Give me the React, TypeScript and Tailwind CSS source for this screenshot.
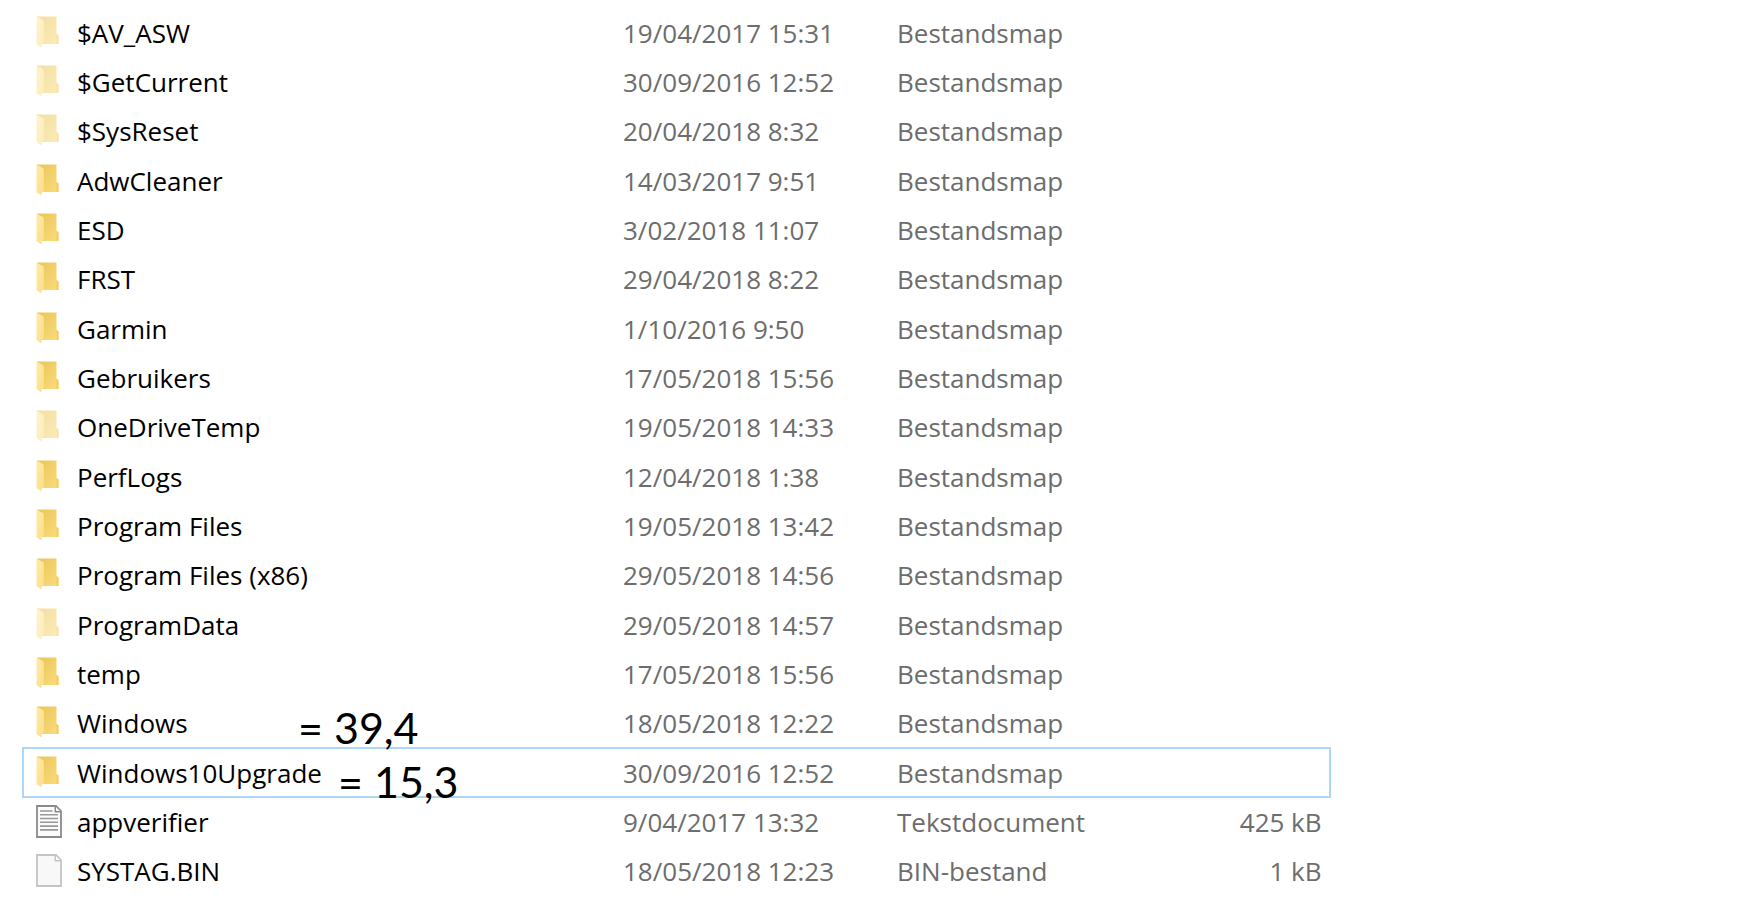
type Kind = 'folder' | 'hidden' | 'text' | 'file';

interface Entry {
  name: string;
  date: string;
  type: string;
  kind: Kind;
  size?: string;
  selected?: boolean;
  note?: string;
  notePlace?: string;
}

const entries: Entry[] = [
  { name: '$AV_ASW', date: '19/04/2017 15:31', type: 'Bestandsmap', kind: 'hidden' },
  { name: '$GetCurrent', date: '30/09/2016 12:52', type: 'Bestandsmap', kind: 'hidden' },
  { name: '$SysReset', date: '20/04/2018 8:32', type: 'Bestandsmap', kind: 'hidden' },
  { name: 'AdwCleaner', date: '14/03/2017 9:51', type: 'Bestandsmap', kind: 'folder' },
  { name: 'ESD', date: '3/02/2018 11:07', type: 'Bestandsmap', kind: 'folder' },
  { name: 'FRST', date: '29/04/2018 8:22', type: 'Bestandsmap', kind: 'folder' },
  { name: 'Garmin', date: '1/10/2016 9:50', type: 'Bestandsmap', kind: 'folder' },
  { name: 'Gebruikers', date: '17/05/2018 15:56', type: 'Bestandsmap', kind: 'folder' },
  { name: 'OneDriveTemp', date: '19/05/2018 14:33', type: 'Bestandsmap', kind: 'hidden' },
  { name: 'PerfLogs', date: '12/04/2018 1:38', type: 'Bestandsmap', kind: 'folder' },
  { name: 'Program Files', date: '19/05/2018 13:42', type: 'Bestandsmap', kind: 'folder' },
  { name: 'Program Files (x86)', date: '29/05/2018 14:56', type: 'Bestandsmap', kind: 'folder' },
  { name: 'ProgramData', date: '29/05/2018 14:57', type: 'Bestandsmap', kind: 'hidden' },
  { name: 'temp', date: '17/05/2018 15:56', type: 'Bestandsmap', kind: 'folder' },
  { name: 'Windows', date: '18/05/2018 12:22', type: 'Bestandsmap', kind: 'folder', note: '= 39,4', notePlace: 'left-[275px] top-1' },
  { name: 'Windows10Upgrade', date: '30/09/2016 12:52', type: 'Bestandsmap', kind: 'folder', selected: true, note: '= 15,3', notePlace: 'left-[315px] top-2' },
  { name: 'appverifier', date: '9/04/2017 13:32', type: 'Tekstdocument', kind: 'text', size: '425 kB' },
  { name: 'SYSTAG.BIN', date: '18/05/2018 12:23', type: 'BIN-bestand', kind: 'file', size: '1 kB' },
];

function FolderIcon({ faded }: { faded: boolean }) {
  return (
    <svg width="26" height="34" viewBox="0 0 26 34" aria-hidden="true" className={faded ? 'opacity-55' : ''}>
      <defs>
        <linearGradient id="folder-back" x1="0" y1="0" x2="1" y2="1">
          <stop offset="0" stopColor="#e9c558" />
          <stop offset="1" stopColor="#fbdc7c" />
        </linearGradient>
        <linearGradient id="folder-flap" x1="0" y1="0" x2="1" y2="1">
          <stop offset="0" stopColor="#ffebaa" />
          <stop offset="1" stopColor="#fbdd86" />
        </linearGradient>
      </defs>
      <path d="M1 0.5H20.5V17.5L22.5 19.5V28H1Z" fill="url(#folder-back)" />
      <path d="M20.5 18L22.5 19.5V28H20.5Z" fill="#f3cd63" />
      <path d="M0.5 0.5L7 4Q7.8 4.5 7.8 5.5V26Q7.8 27 7 27.5L5.5 28.5V31.5L1 28.5Q0.5 28.1 0.5 27.5Z" fill="url(#folder-flap)" />
    </svg>
  );
}

function DocumentIcon({ lined }: { lined: boolean }) {
  const stroke = lined ? '#8a8a8a' : '#c4c4c4';
  return (
    <svg width="26" height="34" viewBox="0 0 26 34" fill="none" aria-hidden="true">
      <path d="M1 1H20L25 6V32H1Z" fill={lined ? '#fbfbfb' : '#f8f8f9'} stroke={stroke} strokeWidth="1.8" />
      <path d="M19.3 1.5V6.7H24.6" fill="#fff" stroke={stroke} strokeWidth="1.5" />
      {lined && (
        <path d="M4 6H16.5M4 9.7H22M4 13.5H22M4 17.3H22M4 21.1H22M4 24.9H22" stroke="#999" strokeWidth="1.6" />
      )}
    </svg>
  );
}

function EntryIcon({ kind }: { kind: Kind }) {
  if (kind === 'folder' || kind === 'hidden') return <FolderIcon faded={kind === 'hidden'} />;
  return <DocumentIcon lined={kind === 'text'} />;
}

export default function App() {
  return (
    <main className="min-h-screen overflow-x-hidden bg-white pl-[23px] pt-2 font-['Open_Sans',sans-serif] text-[26px] leading-8 text-[#6d6d6d]">
      <table className="w-[75.7%] table-fixed border-collapse whitespace-nowrap">
        <colgroup>
          <col className="w-[600px]" />
          <col className="w-[274px]" />
          <col className="w-[240px]" />
          <col />
        </colgroup>
        <tbody>
          {entries.map((entry) => (
            <tr
              key={entry.name}
              className={
                entry.selected
                  ? 'h-[49px] outline-2 -outline-offset-1 outline-[#aed6f6]'
                  : 'h-[49px] nth-[3n]:h-[50px]'
              }
            >
              <td className="relative p-0 pl-[13px]">
                <div className="flex items-center gap-[15px] text-black">
                  <EntryIcon kind={entry.kind} />
                  <span>{entry.name}</span>
                </div>
                {entry.note && (
                  <span className={`absolute font-['Lato',sans-serif] text-[43px] leading-[52px] text-black ${entry.notePlace}`}>
                    {entry.note}
                  </span>
                )}
              </td>
              <td className="p-0">{entry.date}</td>
              <td className="p-0">{entry.type}</td>
              <td className="p-0 pr-2 text-right">{entry.size}</td>
            </tr>
          ))}
        </tbody>
      </table>
    </main>
  );
}
